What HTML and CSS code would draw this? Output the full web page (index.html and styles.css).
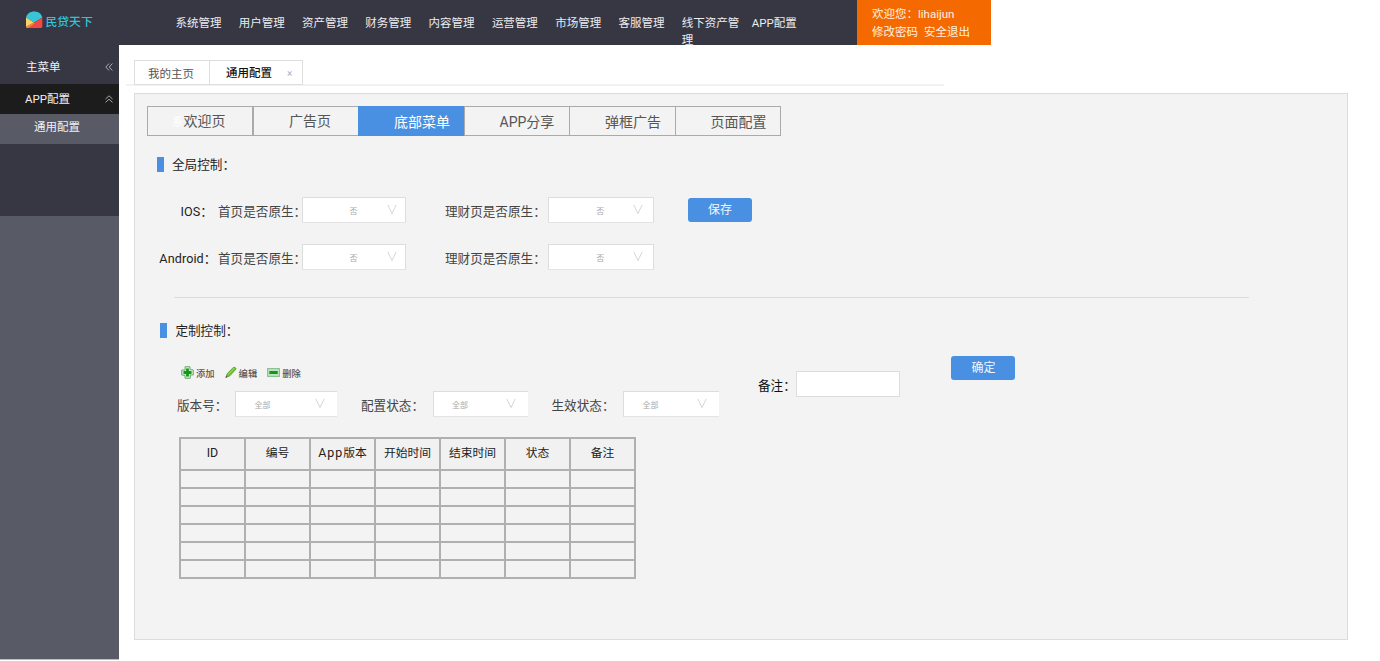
FILE: index.html
```html
<!DOCTYPE html>
<html lang="zh-CN">
<head>
<meta charset="utf-8">
<title>通用配置</title>
<link rel="stylesheet" href="styles.css">
</head>
<body>
<svg class="defs" width="0" height="0"><symbol id="chev" viewBox="0 0 10 11"><path d="M0.8 0.8L5 9.6L9.2 0.8" fill="none" stroke="#d6d6d6" stroke-width="1"/></symbol></svg>
<header class="header">
  <div class="logo">
    <svg width="18" height="18" viewBox="0 0 18 18"><path d="M1 7.6C2 3.6 5.2 1.6 9.2 1.6S16.4 3.6 17.3 7.6L9.2 12.6Z" fill="#36c6d8"/><path d="M1 7.4L9 12.6L1 17Z" fill="#fbd267"/><path d="M17.3 7.4L2 17.6Q2.4 18 3 18H16Q17.3 18 17.3 16.6Z" fill="#f4473f"/><path d="M1 16.8L8.6 12.4L10 13L3.4 18H2.2Q1 18 1 16.8Z" fill="#f58a3c"/></svg>
    <span>民贷天下</span>
  </div>
  <nav class="nav">
    <a>系统管理</a><a>用户管理</a><a>资产管理</a><a>财务管理</a><a>内容管理</a><a>运营管理</a><a>市场管理</a><a>客服管理</a><a class="wide">线下资产管理</a><a>APP配置</a>
  </nav>
  <div class="user"><div>欢迎您：lihaijun</div><div><a>修改密码</a><a>安全退出</a></div></div>
</header>
<div class="body">
  <aside class="side">
    <div class="side-head"><span>主菜单</span><svg width="8" height="8" viewBox="0 0 8 8"><path d="M4 .5L.8 4L4 7.5M7.4 .5L4.2 4L7.4 7.5"/></svg></div>
    <div class="side-group"><span>APP配置</span><svg width="8" height="8" viewBox="0 0 8 8"><path d="M.5 4L4 .8L7.5 4M.5 7.4L4 4.2L7.5 7.4"/></svg></div>
    <div class="side-item">通用配置</div>
    <div class="side-gap"></div>
    <div class="side-rest"></div>
  </aside>
  <main class="main">
    <div class="pages"><div class="page">我的主页</div><div class="page on">通用配置<i>×</i></div></div>
    <section class="panel">
      <div class="tabs">
        <div class="tab first"><em>系</em>欢迎页</div><div class="tab second">广告页</div><div class="tab active">底部菜单</div><div class="tab">APP分享</div><div class="tab">弹框广告</div><div class="tab">页面配置</div>
      </div>
      <h2 class="title"><b></b><span>全局控制：</span></h2>
      <div class="row">
        <label class="os ios">IOS：</label><label class="home">首页是否原生：</label><div class="select"><span>否</span><svg><use href="#chev"/></svg></div>
        <label class="money">理财页是否原生：</label><div class="select second"><span>否</span><svg><use href="#chev"/></svg></div>
        <button class="btn save">保存</button>
      </div>
      <div class="row">
        <label class="os">Android：</label><label class="home">首页是否原生：</label><div class="select"><span>否</span><svg><use href="#chev"/></svg></div>
        <label class="money">理财页是否原生：</label><div class="select second"><span>否</span><svg><use href="#chev"/></svg></div>
      </div>
      <hr class="line">
      <h2 class="title custom"><b></b><span>定制控制：</span></h2>
      <div class="controls">
        <div class="left">
          <div class="tools">
            <div class="tool"><svg width="13" height="13" viewBox="0 0 13 13"><path d="M4 .7H9V3.2L12.3 4V9H9.3V12.3H4V9.5L.7 9V4H4Z" fill="#cde9cf" stroke="#6fae75" stroke-linejoin="round"/><path d="M6.5 2.5V10.5M2.5 6.5H10.5" stroke="#129a17" stroke-width="2.8"/></svg><span>添加</span></div>
            <div class="tool"><svg width="12" height="13" viewBox="0 0 12 13"><path d="M.8 11.5L2.3 7.6L8.3 1.4Q10.4 .6 11.2 2.9L4.9 9.8Z" fill="#6cc22c" stroke="#559d35" stroke-width=".8"/><path d="M3.2 8.6L9.4 2" stroke="#a5df62"/><path d="M.5 11.8L1.5 9.6L2.6 10.8Z" fill="#5d5030"/></svg><span>编辑</span></div>
            <div class="tool"><svg width="13" height="13" viewBox="0 0 13 13"><rect x=".6" y="2.6" width="11.8" height="7.8" fill="#bce2c1" stroke="#86bb8c"/><path d="M2.3 6.5H10.7" stroke="#129a17" stroke-width="3"/></svg><span>删除</span></div>
          </div>
          <div class="filters">
            <label>版本号：</label><div class="select f1"><span>全部</span><svg><use href="#chev"/></svg></div>
            <label>配置状态：</label><div class="select f2"><span>全部</span><svg><use href="#chev"/></svg></div>
            <label>生效状态：</label><div class="select f2"><span>全部</span><svg><use href="#chev"/></svg></div>
          </div>
        </div>
        <div class="remark"><label>备注：</label><input type="text"></div>
        <button class="btn ok">确定</button>
      </div>
      <table class="grid">
        <thead><tr><th><span class="latin">ID</span></th><th>编号</th><th><span class="latin app">App</span>版本</th><th>开始时间</th><th>结束时间</th><th>状态</th><th>备注</th></tr></thead>
        <tbody>
          <tr><td></td><td></td><td></td><td></td><td></td><td></td><td></td></tr>
          <tr><td></td><td></td><td></td><td></td><td></td><td></td><td></td></tr>
          <tr><td></td><td></td><td></td><td></td><td></td><td></td><td></td></tr>
          <tr><td></td><td></td><td></td><td></td><td></td><td></td><td></td></tr>
          <tr><td></td><td></td><td></td><td></td><td></td><td></td><td></td></tr>
          <tr><td></td><td></td><td></td><td></td><td></td><td></td><td></td></tr>
        </tbody>
      </table>
    </section>
  </main>
</div>
</body>
</html>
```
FILE: styles.css
```css
* { box-sizing: border-box; }
body { margin: 0; height: 661px; overflow: hidden; background: #fff; font-family: Roboto, "Noto Sans CJK SC", sans-serif; font-size: 11.5px; color: #333; white-space: nowrap; }
.defs { display: block; }
.header { display: flex; width: 991px; height: 45px; background: #363743; color: #ececef; }
.logo { display: flex; width: 175.4px; padding: 10px 0 0 25px; gap: 2.5px; color: #31c4d6; font-size: 11.8px; font-weight: 500; line-height: 25px; }
.nav { display: flex; width: 681.6px; padding-top: 15px; line-height: 17px; }
.nav a { width: 63.3px; }
.nav .wide { width: 58px; margin-right: 12px; white-space: normal; }
.user { width: 134px; padding: 5px 0 0 15px; background: #f56a00; color: #fff1e6; line-height: 18px; }
.user a + a { margin-left: 6px; }
.body { display: flex; }
.side { display: flex; flex-direction: column; width: 119px; height: 615px; border-bottom: 1px solid #bcbdc2; background: #363743; color: #f0f0f2; }
.side svg { fill: none; stroke: #b5b5bb; stroke-width: .9; }
.side-head, .side-group { display: flex; align-items: center; justify-content: space-between; padding: 0 6px 0 26px; }
.side-head { height: 39px; padding-top: 5px; }
.side-group { height: 30px; padding-left: 25px; background: #1c1c1c; }
.side-head span, .side-group span { margin-top: -2px; }
.side-item { height: 30px; padding-left: 34px; line-height: 26px; background: #585a66; }
.side-gap { height: 72px; }
.side-rest { flex: 1; background: #585a66; }
.main { padding: 15px 0 0 7px; }
.pages { display: flex; width: 818px; height: 26px; padding-left: 8px; border-bottom: 2px solid #f2f2f2; }
.page { height: 25px; width: 75px; border: 1px solid #dedede; border-right: 0; padding-left: 13px; line-height: 26px; color: #555; }
.page.on { width: 94px; border-right: 1px solid #dedede; padding-left: 16px; color: #111; line-height: 24px; font-weight: 500; }
.page i { margin-left: 15px; color: #a7b3cc; font-size: 10px; font-style: normal; font-weight: 400; }
.panel { width: 1214px; height: 547px; margin: 7px 0 0 8px; border: 1px solid #dcdcdc; background: #f3f3f3; }
.tabs { display: grid; grid-template-columns: 104px 106px repeat(4, 105.5px); grid-template-rows: 28px; margin: 12px 0 0 12px; width: 634px; height: 30px; border: 1px solid #aaa; }
.tab { height: 28px; padding-left: 35px; line-height: 30px; font-size: 14px; color: #555; border-left: 1px solid #aaa; }
.tab.first { padding-left: 24px; border-left: 0; line-height: 29px; }
.tab.second { border-left-width: 2px; line-height: 28px; }
.tab em { display: inline-block; width: 11.5px; font-size: 11px; font-style: normal; color: #fff; }
.tab.active { height: 30px; margin: -1px 0; line-height: 32px; background: #4a90e2; border-color: #4a90e2; color: #fff; }
.title { display: flex; align-items: center; gap: 8px; height: 16px; margin: 20px 0 0 22px; font-size: 12.6px; font-weight: 400; color: #222; }
.title b { width: 7px; height: 15px; background: #4a90e2; }
.title span { margin-top: -2px; }
.row { display: flex; align-items: flex-start; height: 47px; }
.title + .row { margin-top: 25px; }
label { font-size: 12.6px; line-height: 30px; color: #444; }
.os { width: 83px; padding-right: 1.5px; text-align: right; color: #222; letter-spacing: .1px; }
.os.ios { padding-right: 5px; }
.home { width: 83.6px; }
.money { width: 103px; margin-left: 39.4px; }
.select { display: flex; justify-content: center; position: relative; width: 104px; height: 26px; border: 1px solid #ddd; border-bottom-color: #e4e4e4; background: #fff; color: #aaa; font-size: 8px; line-height: 27px; }
.select svg { position: absolute; right: 8px; top: 6px; width: 10px; height: 11px; }
.row .select.second { width: 106.4px; padding-right: 2px; }
.row .select.second svg { right: 10px; }
.btn { width: 64px; height: 24px; padding: 0; border: 0; border-radius: 3px; background: #4a90e2; color: #f2f7fd; font: 400 12px/24px Roboto, "Noto Sans CJK SC", sans-serif; }
.save { margin: 1px 0 0 33.6px; }
.line { width: 1075px; height: 1px; margin: 6px 0 0 39px; border: 0; background: #dcdcdc; }
.title.custom { margin: 25px 0 0 25.4px; }
.title.custom b { margin-top: -1px; }
.title.custom span { margin-top: -4px; }
.controls { display: flex; align-items: flex-start; padding: 17px 0 0 42px; height: 98px; }
.left { width: 581px; padding-top: 8px; }
.tools { display: flex; height: 19px; align-items: center; padding-left: 4px; }
.tool { display: flex; align-items: center; gap: 2px; margin: -2px 10px 0 0; font-size: 9.3px; color: #555; font-weight: 500; }
.filters { display: flex; height: 26px; margin-top: 8px; }
.filters .select { border-right: 0; justify-content: flex-start; padding-left: 18.5px; }
.filters label { width: 71.5px; }
.filters label:first-child { width: 58px; }
.filters .f1 { width: 102px; margin-right: 24px; }
.filters .f2 { width: 95.5px; margin-right: 23.5px; }
.filters svg { right: 12px; }
.remark { display: flex; width: 193.4px; padding-top: 15px; }
.remark label { width: 38px; color: #111; }
.remark input { width: 104px; height: 26px; padding: 0; border: 1px solid #ddd; background: #fff; }
.grid { width: 457px; margin-left: 44px; border-collapse: collapse; table-layout: fixed; }
.grid th, .grid td { border: 2px solid #b0b0b0; padding: 0; height: 18px; }
.grid th { height: 32px; padding: 0 0 2px 0; background: #f1f1f1; font-size: 11.8px; font-weight: 400; line-height: 17px; color: #222; }
.latin { font-size: 12.4px; line-height: 1; }
.app { letter-spacing: 1px; }
```
